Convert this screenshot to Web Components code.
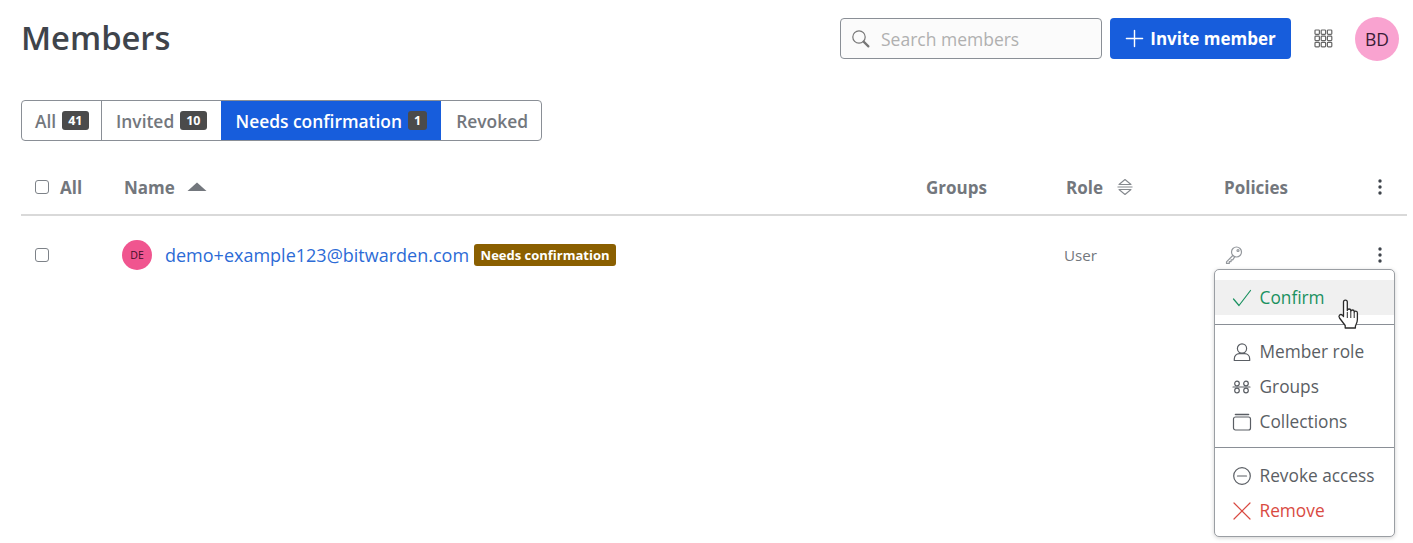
<!DOCTYPE html>
<html lang="en"><head><meta charset="utf-8"><title>Members</title>
<style>
html,body{margin:0;background:#fff;font-family:"Open Sans","Noto Sans",sans-serif;color:#555b63}
body{width:1413px;height:543px;overflow:hidden}
</style></head><body>
<members-page></members-page>
<script>
const ICONS={
 search:'<circle cx="8" cy="8" r="6.2"/><path d="M12.6 12.6l4.8 4.8" stroke-width="2.2"/>',
 plus:'<path d="M10 1.5v17M1.5 10h17"/>',
 check:'<path d="M1.5 11l5.5 6.5L18.5 2.5"/>',
 person:'<circle cx="10" cy="6.5" r="4.6"/><path d="M2.3 18.5v-1.6c0-3 2.2-5.2 5-5.2h5.4c2.8 0 5 2.2 5 5.2v1.6z"/>',
 groups:'<circle cx="5" cy="6.5" r="2.3"/><circle cx="14" cy="6.5" r="2.3"/><circle cx="5" cy="13.5" r="2.3"/><circle cx="14" cy="13.5" r="2.3"/><path d="M1 10h17"/>',
 coll:'<rect x="1.5" y="5" width="17" height="13" rx="2"/><path d="M3.5 2.5h13" stroke-width="1.6"/>',
 minus:'<circle cx="10" cy="10" r="8.3"/><path d="M5.5 10h9"/>',
 close:'<path d="M2 2l16 16M18 2L2 18"/>',
 key:'<circle cx="12.5" cy="7" r="5"/><circle cx="14" cy="5.5" r="1"/><path d="M8.8 10.5L2.5 16.8v1.6h2.8v-1.8h1.8v-1.8h1.6l2-3"/>'
};
const icon=(n,s,c='currentColor',w=1.2)=>`<svg width="${s}" height="${s}" viewBox="0 0 20 20" fill="none" stroke="${c}" stroke-width="${w}" stroke-linecap="round" stroke-linejoin="round" aria-hidden="true">${ICONS[n]}</svg>`;

class TabGroup extends HTMLElement{
 constructor(){super();this.attachShadow({mode:'open'}).innerHTML=`<style>
 :host{display:inline-flex;height:41px;box-sizing:border-box;border:1px solid #8a8f96;border-radius:4px;overflow:hidden;font-size:17.4px;font-weight:600;color:#73777d}
 .t{display:flex;align-items:center;gap:6px;padding:0 13px 0 15px;white-space:nowrap}
 .t+.t{border-left:1px solid #8a8f96}
 .on{background:#175ddc;color:#fff;border-left:0!important;padding:0 14px 0 15px}
 .on+.t{border-left:0}
 b{display:inline-block;background:#4b4b4b;color:#fff;font-size:12.5px;font-weight:700;line-height:19px;height:19px;padding:0 6px;border-radius:3px}
 </style>
 <div class="t" style="padding:0 12.5px 0 13px">All <b>41</b></div>
 <div class="t" style="padding:0 14px">Invited <b>10</b></div>
 <div class="t on">Needs confirmation <b>1</b></div>
 <div class="t">Revoked</div>`}
}
customElements.define('tab-group',TabGroup);

class PageHeader extends HTMLElement{
 constructor(){super();this.attachShadow({mode:'open'}).innerHTML=`<style>
 :host{display:flex;align-items:center;height:41px;padding:18px 14px 0 21px}
 h1{margin:-2px 0 0;font-size:32.7px;font-weight:600;color:#3f444b;flex:1;line-height:41px}
 .s{width:262px;height:41px;box-sizing:border-box;border:1px solid #8a8f96;border-radius:4px;background:#fbfbfb;display:flex;align-items:center;gap:10px;padding-left:10px;font-size:17.5px;color:#b0b0b0}
 .s svg{color:#777;flex:none}
 .b{margin-left:8px;width:181px;height:41px;border-radius:4px;background:#175ddc;color:#fff;display:flex;align-items:center;justify-content:center;gap:6px;font-size:17px;font-weight:700}
 .g{margin-left:23px;width:19px;height:19px;display:block}
 .a{margin-left:22px;width:44px;height:44px;border-radius:50%;background:#f9a3d0;color:#3a1c36;display:flex;align-items:center;justify-content:center;font-size:17.5px}
 </style>
 <h1>Members</h1>
 <div class="s">${icon('search',20)}<span>Search members</span></div>
 <div class="b">${icon('plus',19,'#fff',1.5)}<span>Invite member</span></div>
 <svg class="g" viewBox="0 0 19 19" fill="none" stroke="#666" stroke-width="1.2" aria-hidden="true">${[0,1,2].map(r=>[0,1,2].map(c=>`<rect x="${1+c*6.2}" y="${1+r*6.2}" width="4.4" height="4.4" rx=".8"/>`).join('')).join('')}</svg>
 <div class="a">BD</div>`}
}
customElements.define('page-header',PageHeader);

class MemberTable extends HTMLElement{
 constructor(){super();const dots=`<svg width="4" height="16" viewBox="0 0 4 16" fill="#3f444b" aria-hidden="true"><circle cx="2" cy="2" r="1.7"/><circle cx="2" cy="8" r="1.7"/><circle cx="2" cy="14" r="1.7"/></svg>`;
 this.attachShadow({mode:'open'}).innerHTML=`<style>
 :host{display:block;margin:24px 6px 0 21px}
 .r{display:grid;grid-template-columns:103px 802px 140px 158px 146px 1fr;align-items:center}
 .h{height:51px;padding-bottom:5px;border-bottom:2px solid #d9d9d9;box-sizing:border-box;font-weight:700;color:#73777d;font-size:17px}
 .h>div,.d>div{display:flex;align-items:center}
 .c{width:14px;height:14px;box-sizing:border-box;border:1px solid #7d8288;border-radius:3px;background:#fff;margin:0 11px 0 14px;flex:none}
 .d{height:78px;align-items:start}
 .d>div{height:78px}
 .av{width:30px;height:30px;border-radius:50%;background:#f0558f;color:#3d1027;font-size:10.5px;display:flex;align-items:center;justify-content:center;margin-left:-2px;margin-right:13px;flex:none}
 .m{color:#2c6bd6;font-size:18px;font-weight:500}
 .bd{margin-left:5px;background:#8a5f00;color:#fff;font-size:13px;font-weight:700;line-height:22px;height:22px;padding:0 6.5px;border-radius:3px;white-space:nowrap}
 .u{font-size:15.2px;color:#73777d}
 .nw{white-space:nowrap}
 .end{justify-content:flex-start;padding-left:8px}
 </style>
 <div class="r h"><div><span class="c"></span>All</div>
 <div class="nw">Name <svg style="margin-left:12px" width="20" height="10" viewBox="0 0 20 10" fill="#73777d" aria-hidden="true"><path d="M10 .5l9.5 8.5H.5z"/></svg></div>
 <div>Groups</div>
 <div>Role <svg style="margin-left:13px" width="18" height="18" viewBox="0 0 18 18" fill="none" stroke="#85898e" stroke-width="1.1" stroke-linejoin="round" aria-hidden="true"><path d="M9 1.5L15 6.5H3zM1.5 9h15M3 11.5h12L9 16.5z"/></svg></div>
 <div>Policies</div>
 <div class="end">${dots}</div></div>
 <div class="r d"><div><span class="c"></span></div>
 <div class="nw"><span class="av">DE</span><span class="m">demo+example123@bitwarden.com</span><span class="bd">Needs confirmation</span></div>
 <div></div>
 <div class="u" style="margin-left:-2px">User</div>
 <div style="color:#94989d">${icon('key',20)}</div>
 <div class="end">${dots}</div></div>`}
}
customElements.define('member-table',MemberTable);

class ActionMenu extends HTMLElement{
 constructor(){super();const it=(n,t,cl='')=>`<div class="i ${cl}">${icon(n,20)}<span>${t}</span></div>`;
 this.attachShadow({mode:'open'}).innerHTML=`<style>
 :host{display:block;position:absolute;left:1214px;top:269px;width:181px;height:268px;box-sizing:border-box;border:1px solid #9a9ea3;border-radius:5px;background:#fff;padding:10px 0 8px;box-shadow:0 1px 4px rgba(0,0,0,.18);font-size:17.3px;color:#5a5e64}
 .i{height:35px;display:flex;align-items:center;gap:7.5px;padding-left:17px;white-space:nowrap}
 .on{background:#f0f0f0;color:#1a9160}
 .re{color:#d94a42}
 hr{border:0;border-top:1px solid #8a8f96;margin:8px 0 10px}
 hr.a{margin:9px 0}
 </style>
 ${it('check','Confirm','on')}<hr class="a">
 ${it('person','Member role')}${it('groups','Groups')}${it('coll','Collections')}<hr>
 ${it('minus','Revoke access')}${it('close','Remove','re')}`}
}
customElements.define('action-menu',ActionMenu);

class HandCursor extends HTMLElement{
 constructor(){super();this.attachShadow({mode:'open'}).innerHTML=`<style>:host{display:block;position:absolute;left:1337px;top:299px;width:24px;height:32px}</style>
 <svg width="24" height="32" viewBox="0 0 24 32" aria-hidden="true"><path d="M6.5 3c0-2.6 3.8-2.6 3.8 0v8.5c0-2 3.5-2 3.5 0v1c0-2 3.4-2 3.4 0v1c0-1.8 3.2-1.8 3.2 .5v6.5c0 3-1 4.5-2 6.5v2H8.2v-2.5L2.5 19c-1.6-2.5 1-4.5 3-2.8l1 1.3z" fill="#fff" stroke="#2b2b2b" stroke-width="1.3" stroke-linejoin="round"/><path d="M10.3 13v6M13.8 13v6M17.2 14v5" stroke="#2b2b2b" stroke-width="1" fill="none"/></svg>`}
}
customElements.define('hand-cursor',HandCursor);

class MembersPage extends HTMLElement{
 constructor(){super();this.attachShadow({mode:'open'}).innerHTML=`<style>:host{display:block}
 tab-group{margin:41px 0 0 21px}</style>
 <page-header></page-header><tab-group></tab-group><member-table></member-table>
 <action-menu></action-menu><hand-cursor></hand-cursor>`}
}
customElements.define('members-page',MembersPage);
</script>
</body></html>
